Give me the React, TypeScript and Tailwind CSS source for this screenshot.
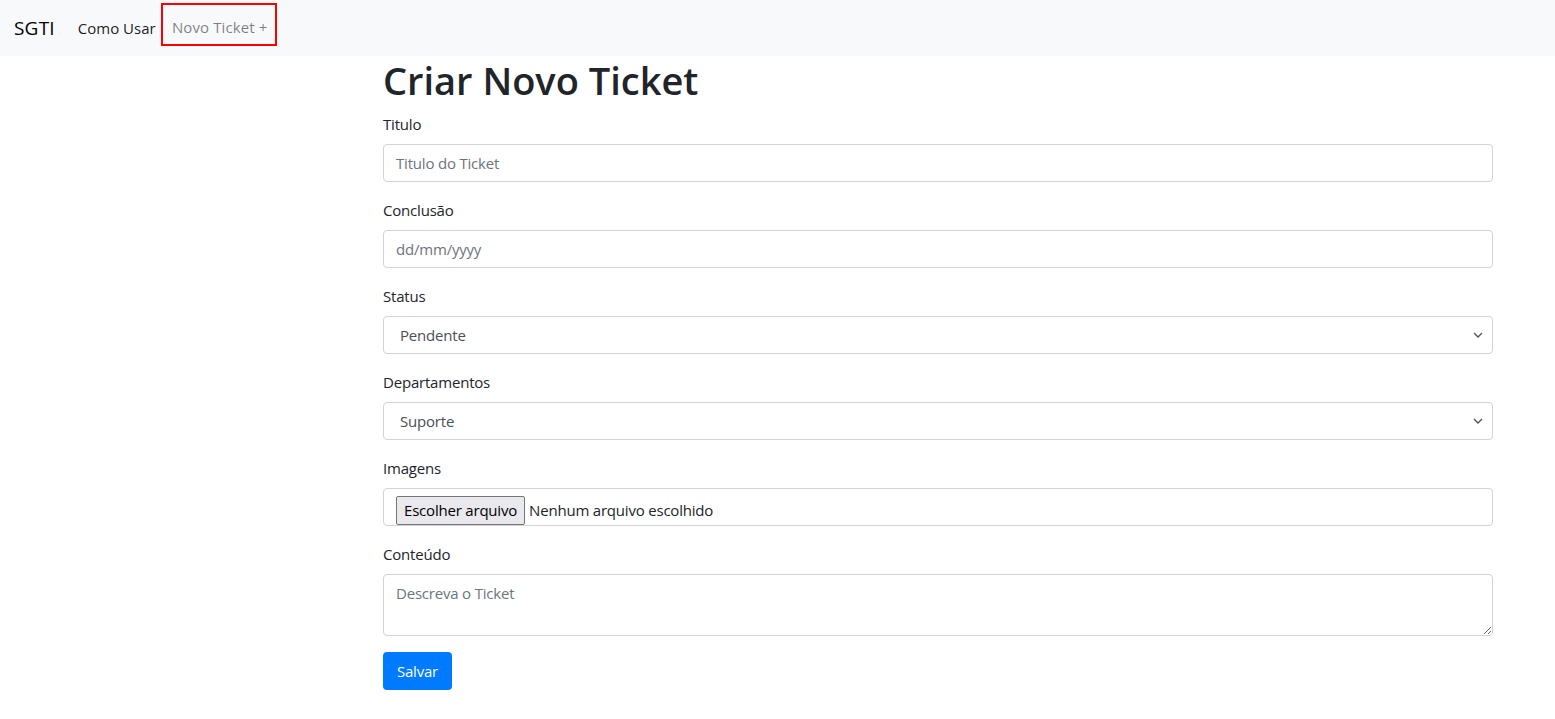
import React from "react";

const font = { fontFamily: '"Open Sans", "Noto Sans", sans-serif' };

function Chevron() {
  return (
    <svg width="10" height="6" viewBox="0 0 10 6" className="absolute right-[9px] top-1/2 -translate-y-1/2 pointer-events-none">
      <path d="M1 1 L5 5 L9 1" fill="none" stroke="#555" strokeWidth="1.4" />
    </svg>
  );
}

export default function App() {
  return (
    <div className="min-h-screen bg-white text-[#212529]" style={font}>
      <nav className="h-[56px] bg-[#f8f9fa] flex items-center pl-[14px]">
        <span className="text-[19px] text-black mr-[23px] tracking-[0.2px]">SGTI</span>
        <span className="text-[15px] text-black/90">Como Usar</span>
        <span className="ml-[5px] h-[43px] mt-[-7px] w-[116px] border-2 border-[#ff0000] flex items-center justify-center pt-[6px] pl-[2px] text-[15px] text-black/50 tracking-[0.1px]">
          Novo Ticket +
        </span>
      </nav>
      <div className="ml-[383px] w-[1110px]">
        <h1 className="text-[38px] leading-[48px] font-semibold mb-[8px]">Criar Novo Ticket</h1>

        <div className="mb-[16px]">
          <label className="block text-[15px] leading-[24px] mb-[8px] tracking-[-0.2px]">Titulo</label>
          <input
            className="block w-full h-[38px] border border-[#ced4da] rounded-[4px] px-[12px] text-[15px] text-[#495057] placeholder:text-[#6c757d] outline-none tracking-[-0.2px]"
            placeholder="Titulo do Ticket"
          />
        </div>

        <div className="mb-[16px]">
          <label className="block text-[15px] leading-[24px] mb-[8px] tracking-[-0.2px]">Conclusão</label>
          <input
            className="block w-full h-[38px] border border-[#ced4da] rounded-[4px] px-[12px] text-[15px] text-[#495057] placeholder:text-[#6c757d] outline-none tracking-[-0.2px]"
            placeholder="dd/mm/yyyy"
          />
        </div>

        <div className="mb-[16px]">
          <label className="block text-[15px] leading-[24px] mb-[8px] tracking-[-0.2px]">Status</label>
          <div className="relative w-full h-[38px] border border-[#ced4da] rounded-[4px] flex items-center pl-[16px] text-[15px] text-[#495057] tracking-[-0.2px]">
            Pendente
            <Chevron />
          </div>
        </div>

        <div className="mb-[16px]">
          <label className="block text-[15px] leading-[24px] mb-[8px] tracking-[-0.2px]">Departamentos</label>
          <div className="relative w-full h-[38px] border border-[#ced4da] rounded-[4px] flex items-center pl-[16px] text-[15px] text-[#495057] tracking-[-0.2px]">
            Suporte
            <Chevron />
          </div>
        </div>

        <div className="mb-[16px]">
          <label className="block text-[15px] leading-[24px] mb-[8px] tracking-[-0.2px]">Imagens</label>
          <div className="w-full h-[38px] border border-[#ced4da] rounded-[4px] flex items-center pl-[12px] text-[15px] text-[#212529] tracking-[-0.2px]">
            <span className="h-[29px] mt-[6px] px-[7px] flex items-center bg-[#e9e9ed] border border-[#767676] rounded-[2px] text-black">
              Escolher arquivo
            </span>
            <span className="ml-[4px] mt-[6px] text-[#212529]">Nenhum arquivo escolhido</span>
          </div>
        </div>

        <div className="mb-[16px]">
          <label className="block text-[15px] leading-[24px] mb-[8px] tracking-[-0.2px]">Conteúdo</label>
          <textarea
            rows={2}
            className="block w-full h-[62px] border border-[#ced4da] rounded-[4px] px-[12px] py-[6px] text-[15px] leading-[24px] text-[#495057] placeholder:text-[#6c757d] outline-none tracking-[-0.2px]"
            placeholder="Descreva o Ticket"
          />
        </div>

        <button className="h-[38px] w-[69px] bg-[#007bff] text-white text-[15px] rounded-[4px] tracking-[-0.2px]">
          Salvar
        </button>
      </div>
    </div>
  );
}
